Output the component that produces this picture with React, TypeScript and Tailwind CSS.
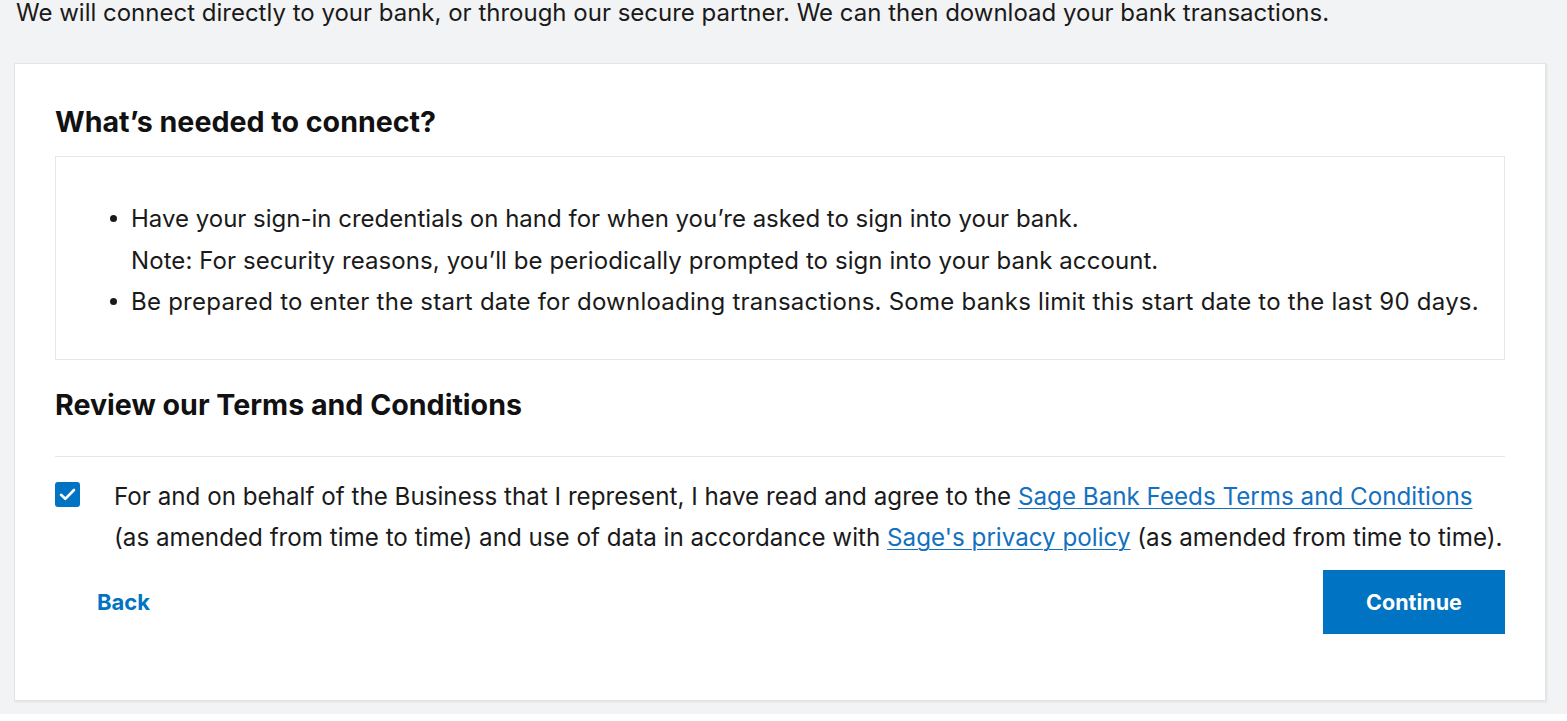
import React from "react";

const font = { fontFamily: "Inter, 'Noto Sans', sans-serif" };

export default function App() {
  return (
    <div className="min-h-screen w-full bg-[#f2f3f4] text-[#1a1a1a]" style={font}>
      <div className="pl-[16px] -mt-[7px] text-[24px] leading-[40px] whitespace-nowrap">
        We will connect directly to your bank, or through our secure partner. We can then download your bank transactions.
      </div>
      <div className="mt-[30px] ml-[14px] w-[1532px] h-[638px] bg-white border border-[#e3e4e6] shadow-[1px_1px_2px_rgba(0,0,0,0.08)] px-[40px] pt-[42px]">
        <h2 className="text-[28.6px] leading-[32px] font-bold text-[#111]">What’s needed to connect?</h2>
        <div className="mt-[18px] h-[204px] border border-[#e6e7e8] pl-[54px] pt-[41px]">
          <ul className="text-[24px] leading-[41.5px]">
            <li className="flex">
              <span className="mt-[17px] mr-[14px] w-[7px] h-[7px] rounded-full bg-[#1a1a1a] shrink-0" />
              <span className="whitespace-nowrap">
                Have your sign-in credentials on hand for when you’re asked to sign into your bank.
                <br />
                <span className="tracking-[0.08px]">Note: For security reasons, you’ll be periodically prompted to sign into your bank account.</span>
              </span>
            </li>
            <li className="flex">
              <span className="mt-[17px] mr-[14px] w-[7px] h-[7px] rounded-full bg-[#1a1a1a] shrink-0" />
              <span className="whitespace-nowrap tracking-[0.24px]">
                Be prepared to enter the start date for downloading transactions. Some banks limit this start date to the last 90 days.
              </span>
            </li>
          </ul>
        </div>
        <h2 className="mt-[29px] text-[28.6px] leading-[32px] font-bold text-[#111]">Review our Terms and Conditions</h2>
        <div className="mt-[35px] h-px bg-[#e6e7e8]" />
        <div className="mt-[19px] flex items-start">
          <div className="mt-[6px] w-[25px] h-[25px] rounded-[3px] bg-[#0073c2] flex items-center justify-center shrink-0">
            <svg width="25" height="25" viewBox="0 0 25 25" fill="none">
              <path d="M6 12.8 L10.3 16.8 L19 8" stroke="white" strokeWidth="2.6" strokeLinecap="round" strokeLinejoin="round" />
            </svg>
          </div>
          <p className="ml-[34px] text-[24.2px] leading-[41px] whitespace-nowrap">
            For and on behalf of the Business that I represent, I have read and agree to the{" "}
            <a className="text-[#1470c0] underline underline-offset-[3px] decoration-1" href="#">Sage Bank Feeds Terms and Conditions</a>
            <br />
            (as amended from time to time) and use of data in accordance with{" "}
            <a className="text-[#1470c0] underline underline-offset-[3px] decoration-1" href="#">Sage's privacy policy</a> (as amended from time to time).
          </p>
        </div>
        <div className="mt-[12px] flex items-center justify-between">
          <button className="ml-[42px] text-[22px] font-bold text-[#0073c2]">Back</button>
          <button className="w-[182px] h-[64px] bg-[#0073c2] text-white text-[21.5px] font-bold">Continue</button>
        </div>
      </div>
    </div>
  );
}
